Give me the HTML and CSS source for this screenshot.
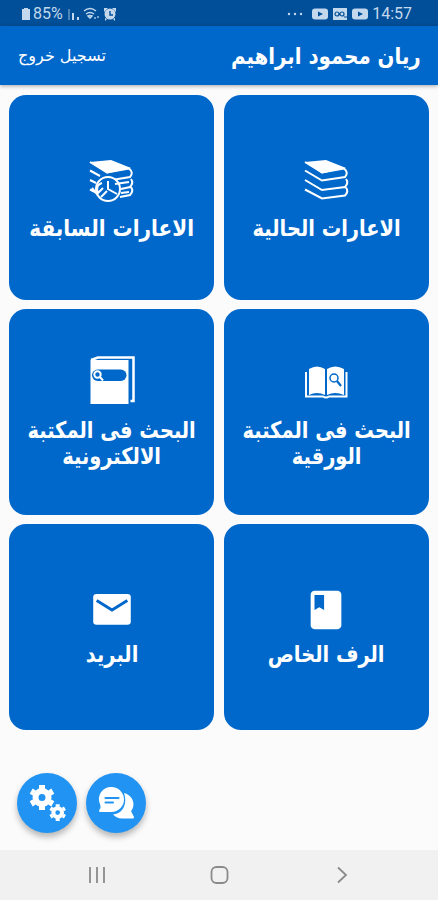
FILE: index.html
```
<!DOCTYPE html>
<html lang="ar" dir="rtl">
<head>
    <meta charset="UTF-8">
    <meta name="viewport" content="width=device-width, initial-scale=1.0">
    <title>المكتبة</title>
    <link rel="stylesheet" href="styles.css">
</head>
<body>
    <div id="main">
        <div id="status" dir="ltr">
            <div class="side">
                <svg width="10" height="14" viewBox="0 0 10 14"><path d="M3 1h4v1h2v11H1V2h2z"/></svg>
                <span class="battery">85%</span>
                <svg class="signal" width="13" height="14" viewBox="0 0 13 14"><path opacity=".4" d="M1 2h2v11H1z"/><path d="M5 6h2v7H5zM10 10h2v3h-2z"/></svg>
                <svg class="wifi" width="17" height="14" viewBox="0 0 17 14"><path d="M1 4q6-5 12 0M3 7q4-3 8 0M5 9q2-1 4 0l-2 2z" fill="none" stroke="#c3d8ec" stroke-width="1.5"/><path d="M11 10h2v2h-2zM14 9h2v2h-2z" opacity=".6"/></svg>
                <svg class="alarm" width="14" height="14" viewBox="0 0 14 14"><path d="M1 1h4l-4 4zM13 1H9l4 4zM2 11l2 1-2 2zM12 11l-2 1 2 2z"/><circle cx="7" cy="7" r="5.5"/><path d="M7 4v4h3" fill="none" stroke="#004f98" stroke-width="1.4"/></svg>
            </div>
            <div class="side">
                <svg class="dots" width="16" height="14" viewBox="0 0 16 14"><circle cx="2" cy="7" r="1.2"/><circle cx="8" cy="7" r="1.2"/><circle cx="14" cy="7" r="1.2"/></svg>
                <svg class="tube" width="16" height="14" viewBox="0 0 16 14"><rect y="1.5" width="16" height="11" rx="3"/><path d="M6 4.5v5l5-2.5z" fill="#004f98"/></svg>
                <svg class="tube" width="16" height="14" viewBox="0 0 16 14"><path d="M1 1h14v12H1z"/><path d="M3 7a2 2 0 1 1 4 0 2 2 0 1 1-4 0m5 0a2 2 0 1 1 4 0 2 2 0 1 1-4 0m4 3h3" fill="none" stroke="#004f98" stroke-width="1.2"/></svg>
                <svg class="tube" width="16" height="14" viewBox="0 0 16 14"><rect y="1.5" width="16" height="11" rx="3"/><path d="M6 4.5v5l5-2.5z" fill="#004f98"/></svg>
                <span class="clock">14:57</span>
            </div>
        </div>

        <div id="appbar">
            <h1>ريان محمود ابراهيم</h1>
            <a class="logout">تسجيل خروج</a>
        </div>

        <div id="cards">
            <div class="card">
                <svg class="icon" viewBox="0 0 48 48">
                    <path d="M3 9L24 7L44 15L20 20.5z" fill="#fff"/>
                    <path d="M3 9l17 10.5 22-4q5 4 1 8.500L20 27.500 3 17.500M3 27l17 10 23-3q4-4 1-8M3 36.500l17 9 23-3q4-4 1-8" class="line"/>
                </svg>
                <div class="label">الاعارات الحالية</div>
            </div>
            <div class="card">
                <svg class="icon" viewBox="0 0 48 48">
                    <path d="M2 9L23 7L43 15L19 20.5z" fill="#fff"/>
                    <path d="M2 9l17 10.5 22-4q5 4 1 8.500L27 26.500M12 23L2 17.500M33 36l9-2q4-4 1-8M2 27l6 3M2 36.500l6 3M32 44l10-2q4-4 1-8M27 31l14-2M33 40l8-1" class="line"/>
                    <circle cx="20" cy="36" r="12" class="line"/>
                    <path d="M20 28v8l9 5M4 35l5 6 6-6M10 41q-3-9 4-11M13 44l6-6" class="line"/>
                </svg>
                <div class="label wide">الاعارات السابقة</div>
            </div>
            <div class="card">
                <svg class="icon" viewBox="0 0 48 48">
                    <path d="M7 14q8-5 16 0v26q-8-4-16 0zM25 14q8-5 17 0v26q-9-4-17 0z" fill="#fff"/>
                    <path d="M4 17v24.5h17q3 2 6 0h17.500V17" class="line"/>
                    <circle cx="32" cy="23" r="4" class="cut"/>
                    <path d="M35 26l4 5" class="cut thick"/>
                </svg>
                <div class="label">البحث فى المكتبة<br>الورقية</div>
            </div>
            <div class="card">
                <svg class="icon" viewBox="0 0 48 48">
                    <path d="M2.5 5h38v44h-38z" fill="#fff"/>
                    <path d="M3 5l7-2.5h35.500V46h-3" class="line book"/>
                    <rect x="4" y="14.5" width="34.5" height="11.5" rx="5.7" fill="#0068cb"/>
                    <circle cx="9.500" cy="19.500" r="3.2" class="line"/>
                    <path d="M12 22l3 3.500" class="line"/>
                </svg>
                <div class="label">البحث فى المكتبة<br>الالكترونية</div>
            </div>
            <div class="card small">
                <svg class="icon" viewBox="0 0 24 24">
                    <path d="M18 2H6c-1.1 0-2 .9-2 2v16c0 1.1.9 2 2 2h12c1.100 0 2-.9 2-2V4c0-1.100-.9-2-2-2z" fill="#fff"/>
                    <path d="M6 4.200h5v7.800l-2.500-1.500L6 12z" fill="#0068cb"/>
                </svg>
                <div class="label">الرف الخاص</div>
            </div>
            <div class="card small">
                <svg class="icon" viewBox="0 0 24 24">
                    <rect x="2.200" y="3.700" width="19.600" height="16" rx="1.700" fill="#fff"/>
                    <path d="M4 7l8 5 8-5" class="cut"/>
                </svg>
                <div class="label">البريد</div>
            </div>
        </div>

        <div id="actions">
            <div class="fab">
                <svg width="36" height="36" viewBox="0 0 36 36">
                    <path d="M26 8c11 3 11 14 7 18l3 6q0 2-2 1.500H24c-4 0-7-2-9-4C24 29 30 20 26 8z"/>
                    <path d="M13.500 2a12 12 0 1 1 0 25H2q-2-1 0-3 1-2 0-5a12 12 0 0 1 11.500-17z"/>
                    <path d="M7.500 13h13M7.500 17.500h7.500" stroke="#2194f3" stroke-width="2"/>
                </svg>
            </div>
            <div class="fab">
                <svg width="38" height="38" viewBox="0 0 38 38">
                    <g id="gear">
                        <circle cx="14" cy="13.500" r="6.5" fill="none" stroke="#fff" stroke-width="6"/>
                        <path d="M11 5V1h6v4zM11 22v4h6v-4zM4.700 11.600L1.700 9.800l3-5.200 3 1.800zM20.300 20.600l3 1.800 3-5.200-3-1.800zM23.300 11.600l3-1.800-3-5.200-3 1.800zM7.700 20.600l-3 1.800-3-5.200 3-1.800z"/>
                    </g>
                    <use href="#gear" transform="translate(20.3 19.500) scale(.67)"/>
                </svg>
            </div>
        </div>

        <div id="navbar" dir="ltr">
            <svg width="20" height="20" viewBox="0 0 20 20"><path d="M4 2v16M11 2v16M18 2v16"/></svg>
            <svg width="20" height="20" viewBox="0 0 20 20"><rect x="2.500" y="2" width="16" height="16" rx="5"/></svg>
            <svg width="20" height="20" viewBox="0 0 20 20"><path d="M6 2.5l8 7.500-8 7.500"/></svg>
        </div>
    </div>
</body>
</html>
```
FILE: styles.css
```
*{
    margin: 0;
    padding: 0;
    box-sizing: border-box;
}
html,body{
    width: 100%;
    height: 100%;
}
body{
    font-family: "DejaVu Sans", sans-serif;
    background-color: #fbfbfb;
}
#main{
    width: 100%;
    height: 100%;
    display: flex;
    flex-direction: column;
    overflow: hidden;
}
#status{
    height: 26px;
    padding: 1px 26px 0 21px;
    background-color: #004f98;
    color: #c3d8ec;
    fill: #c3d8ec;
    display: flex;
    justify-content: space-between;
    align-items: center;
    font-family: Roboto, sans-serif;
    font-size: 16px;
}
.side{
    display: flex;
    align-items: center;
}
.battery{
    margin-left: 2px;
    width: 31px;
    font-size: 16px;
}
.signal{
    margin-left: 3px;
}
.wifi{
    margin-left: 3px;
}
.alarm{
    margin-left: 3px;
}
.dots{
    margin-right: 9px;
}
.tube{
    margin-right: 4px;
}
#appbar{
    height: 59px;
    padding: 0 17px 0 18px;
    background-color: #0068cb;
    color: white;
    display: flex;
    justify-content: space-between;
    align-items: center;
    box-shadow: 0 1px 4px rgba(0, 0, 0, 0.35);
    white-space: nowrap;
}
#appbar h1{
    font-size: 23px;
    transform: scaleX(0.86);
    transform-origin: right;
}
.logout{
    font-size: 16px;
}
#cards{
    padding: 9.5px 9px 0;
    display: grid;
    grid-template-columns: 1fr 1fr;
    grid-auto-rows: 205.5px;
    gap: 9.3px;
}
.card{
    background-color: #0068cb;
    border-radius: 17px;
    color: white;
    display: flex;
    flex-direction: column;
    align-items: center;
    justify-content: center;
    gap: 14px;
}
.card.small{
    gap: 8px;
}
.icon{
    width: 48px;
    height: 48px;
    overflow: visible;
}
.small .icon{
    width: 46px;
    height: 46px;
}
.line{
    fill: none;
    stroke: white;
    stroke-width: 2;
}
.book{
    stroke-width: 2.5;
}
.cut{
    fill: none;
    stroke: #0068cb;
    stroke-width: 1.5;
}
.thick{
    stroke-width: 2.2;
}
/* condensed a little, the bold face is too wide for the cards */
.label{
    font-size: 23px;
    font-weight: bold;
    line-height: 26px;
    text-align: center;
    white-space: nowrap;
    transform: scaleX(0.845);
}
.label.wide{
    transform: scaleX(0.87);
}
#actions{
    margin-top: 43px;
    padding-left: 17px;
    display: flex;
    justify-content: flex-end;
    gap: 9px;
}
.fab{
    width: 60px;
    height: 60px;
    border-radius: 50%;
    background-color: #2194f3;
    fill: white;
    display: flex;
    align-items: center;
    justify-content: center;
    box-shadow: 0 4px 6px rgba(0, 0, 0, 0.28);
}
.fab path{
    stroke-linecap: round;
}
#navbar{
    height: 50px;
    margin-top: auto;
    padding: 0 86px;
    background-color: #f1f1f1;
    display: flex;
    justify-content: space-between;
    align-items: center;
    fill: none;
    stroke: #8b8b8b;
    stroke-width: 1.8;
}
```
